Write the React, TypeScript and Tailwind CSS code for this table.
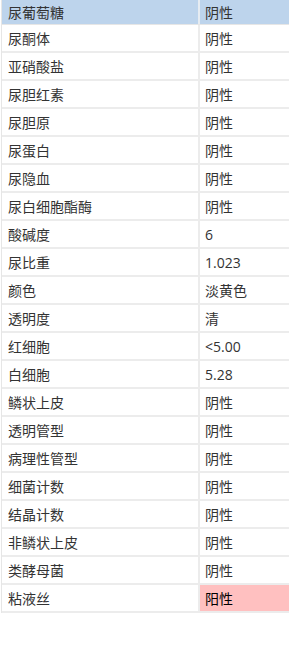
const rows: [string, string][] = [
  ["尿酮体", "阴性"],
  ["亚硝酸盐", "阴性"],
  ["尿胆红素", "阴性"],
  ["尿胆原", "阴性"],
  ["尿蛋白", "阴性"],
  ["尿隐血", "阴性"],
  ["尿白细胞酯酶", "阴性"],
  ["酸碱度", "6"],
  ["尿比重", "1.023"],
  ["颜色", "淡黄色"],
  ["透明度", "清"],
  ["红细胞", "<5.00"],
  ["白细胞", "5.28"],
  ["鳞状上皮", "阴性"],
  ["透明管型", "阴性"],
  ["病理性管型", "阴性"],
  ["细菌计数", "阴性"],
  ["结晶计数", "阴性"],
  ["非鳞状上皮", "阴性"],
  ["类酵母菌", "阴性"],
  ["粘液丝", "阳性"],
];

export default function App() {
  return (
    <div
      className="w-[289px] h-[646px] bg-white text-[14px] text-[#333]"
      style={{ fontFamily: '"Open Sans", "Noto Sans CJK SC", sans-serif' }}
    >
      <div className="ml-px border-l border-[#e6e6e6]">
        <div className="grid grid-cols-[198px_1fr] h-[25px] bg-[#bdd4ec] border-b border-[#e6e6e6]">
          <div className="pl-[6px] flex items-center border-r-2 border-[#e6ecf2]">尿葡萄糖</div>
          <div className="pl-[5px] flex items-center">阴性</div>
        </div>
        {rows.map(([name, value], idx) => {
          const positive = value === "阳性";
          return (
            <div
              key={idx}
              className="grid grid-cols-[198px_1fr] h-[28px] border-b-2 border-[#ececec]"
            >
              <div className="pl-[6px] flex items-center border-r-2 border-[#ececec]">{name}</div>
              <div
                className={`pl-[5px] flex items-center ${
                  positive ? "bg-[#ffc0c0] text-black" : ""
                }`}
              >
                {value}
              </div>
            </div>
          );
        })}
      </div>
    </div>
  );
}
